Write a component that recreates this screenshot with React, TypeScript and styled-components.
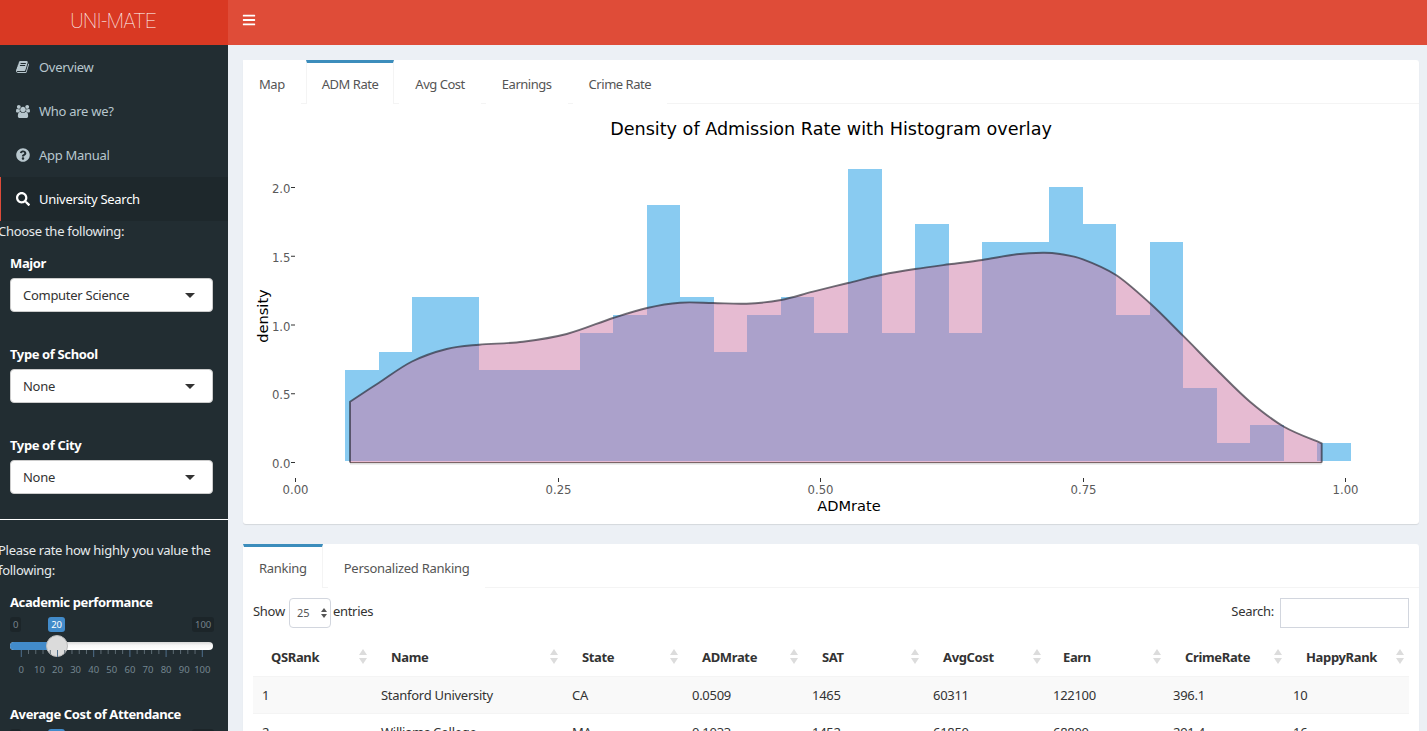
import React from "react";
import styled, { createGlobalStyle } from "styled-components";
import { FaBars, FaQuestionCircle, FaSearch } from "react-icons/fa";

const SANS = `"Noto Sans", "Open Sans", "Liberation Sans", sans-serif`;
const PLOT = `"DejaVu Sans", Verdana, sans-serif`;

const Global = createGlobalStyle`
  html, body { margin: 0; padding: 0; height: 100%; overflow: hidden; background: #ecf0f5; }
  body { font-family: ${SANS}; font-size: 13px; letter-spacing: -0.28px; color: #333; }
  * { box-sizing: border-box; }
`;

const Page = styled.div`height: 731px; display: flex; flex-direction: column; overflow: hidden;`;
const Header = styled.header`height: 45px; flex: none; display: flex; background: #df4c38;`;
const Logo = styled.div`
  width: 228px; background: #d93923; color: #fff; display: flex; align-items: center; justify-content: center;
  padding: 0 2px 4px 0;
  font-family: Roboto, sans-serif; font-weight: 100; font-size: 20px; letter-spacing: -0.55px;
`;
const Toggle = styled.div`width: 42px; padding-bottom: 5px; display: flex; align-items: center; justify-content: center; color: #fff; font-size: 14px;`;
const Body = styled.div`flex: 1; display: flex; min-height: 0;`;
const Sidebar = styled.aside`width: 228px; flex: none; background: #222d32; color: #fff; overflow: hidden;`;
const MenuItem = styled.div<{ $active?: boolean }>`
  height: 44px; display: flex; align-items: center; padding-left: ${p => (p.$active ? 15 : 16)}px; gap: 9px;
  color: ${p => (p.$active ? "#fff" : "#b8c7ce")};
  background: ${p => (p.$active ? "#1e282c" : "transparent")};
  border-left: ${p => (p.$active ? "1px solid #dd4b39" : "0")};
`;
const IconSlot = styled.span`width: 14px; height: 14px; display: flex; align-items: center; justify-content: center; font-size: 14px; flex: none;`;
const Plain = styled.div<{ $top?: number }>`
  margin: ${p => p.$top ?? 0}px 0 0 -2px; line-height: 20px; color: #e6eaec; padding-right: 4px;
`;
const Group = styled.div<{ $top: number }>`margin-top: ${p => p.$top}px; padding: 0 15px 0 10px;`;
const FieldLabel = styled.div`font-weight: 700; color: #fff; line-height: 18px; letter-spacing: -0.38px;`;
const SelectBox = styled.div`
  margin-top: 6px; height: 34px; background: #fff; border: 1px solid #ccc; border-radius: 4px; color: #333;
  display: flex; align-items: center; justify-content: space-between; padding: 0 17px 0 12px;
`;
const Caret = styled.span`width: 0; height: 0; border-left: 5px solid transparent; border-right: 5px solid transparent; border-top: 5px solid #333;`;
const Rule = styled.hr`margin: 25px 0 0; border: 0; border-top: 1px solid #fff; height: 0;`;
const Slider = styled.div`position: relative; height: 70px; margin-top: 4px;`;
const Bubble = styled.span<{ $left: number; $blue?: boolean }>`
  position: absolute; top: 2px; left: ${p => p.$left}px; height: 15px; padding: 0 3px; border-radius: 3px;
  font-size: 9.5px; line-height: 15px; letter-spacing: 0;
  color: ${p => (p.$blue ? "#fff" : "#76838b")}; background: ${p => (p.$blue ? "#428bca" : "#1c2529")};
`;
const Track = styled.div`
  position: absolute; top: 27px; left: 0; right: 0; height: 8px; border-radius: 4px;
  background: linear-gradient(#d8d8d8, #f6f6f6 40%, #fff);
`;
const TrackFill = styled.div`position: absolute; top: 27px; left: 0; height: 8px; border-radius: 4px 0 0 4px; background: #428bca;`;
const Handle = styled.div`
  position: absolute; top: 20px; width: 22px; height: 22px; border-radius: 50%; background: #dbdbdb; border: 1px solid #bbb;
`;
const Ruler = styled.svg`position: absolute; left: 0; top: 35px; width: 203px; height: 26px; display: block;`;

const Main = styled.main`flex: 1; min-width: 0; padding: 15px 8px 0 15px; display: flex; flex-direction: column; gap: 20px;`;
const Box = styled.section<{ $h?: number }>`
  background: #fff; border-radius: 3px; box-shadow: 0 1px 1px rgba(0,0,0,.1); flex: none;
  ${p => (p.$h ? `height: ${p.$h}px;` : "")}
`;
const Tabs = styled.nav<{ $tight?: boolean }>`
  display: flex; height: 44px; border-bottom: 1px solid #f4f4f4;
  letter-spacing: ${p => (p.$tight ? "-0.47px" : "-0.28px")};
`;
const Tab = styled.div<{ $active?: boolean }>`
  padding: 0 15px; margin-right: 5px; display: flex; align-items: center; color: #555; height: 44px;
  border-top: 3px solid ${p => (p.$active ? "#3c8dbc" : "transparent")};
  border-left: 1px solid ${p => (p.$active ? "#f4f4f4" : "transparent")};
  border-right: 1px solid ${p => (p.$active ? "#f4f4f4" : "transparent")};
  background: #fff;
  &:first-child { border-left-color: transparent; }
`;
const ChartSvg = styled.svg`display: block; width: 1176px; height: 420px;`;
const TablePane = styled.div`padding: 10px 10px 0;`;
const Controls = styled.div`display: flex; justify-content: space-between; align-items: flex-start; height: 30px;`;
const Inline = styled.div`display: flex; align-items: flex-start; gap: 3px; line-height: 26px;`;
const LenSelect = styled.div`
  width: 42px; height: 30px; margin: 0 -1px 0 1px; border: 1px solid #d2d6de; border-radius: 4px; display: flex; align-items: center;
  padding-left: 7px; justify-content: space-between; padding-right: 2px; font-size: 11px; color: #555; letter-spacing: 0;
`;
const Search = styled.div`width: 129px; height: 30px; border: 1px solid #d2d6de; margin-left: 3px;`;
const Table = styled.table`
  width: 1156px; margin: 10px 0 0 0; border-collapse: collapse; table-layout: fixed;
`;
const Th = styled.th<{ $pl: number; $pr: number }>`
  height: 38px; padding: 0 ${p => p.$pr}px 0 ${p => p.$pl}px; text-align: left; font-weight: 700; color: #333; letter-spacing: -0.35px;
`;
const ThInner = styled.div`display: flex; align-items: center; justify-content: space-between;`;
const Td = styled.td`height: 37px; padding: 0 0 0 9px; border-top: 1px solid #f4f4f4;`;
const Tr = styled.tr<{ $odd?: boolean }>`background: ${p => (p.$odd ? "#f9f9f9" : "#fff")};`;

const BookIcon = () => (
  <svg width="14" height="14" viewBox="0 0 1792 1792" fill="currentColor"><path d="M1639 478q40 57 18 129l-275 906q-19 64-76.5 107.5t-122.5 43.5h-923q-77 0-148.5-53.5t-99.5-131.5q-24-67-2-127 0-4 3-27t4-37q1-8-3-21.5t-3-19.5q2-11 8-21t16.5-23.5 16.5-23.5q23-38 45-91.5t30-91.5q3-10 .5-30t-.5-28q3-11 17-28t17-23q21-36 42-92t25-90q1-9-2.5-32t.5-28q4-13 22-30.5t22-22.5q19-26 42.5-84.5t27.5-96.5q1-8-3-25.5t-2-26.5q2-8 9-18t18-23 17-21q8-12 16.5-30.5t15-35 16-36 19.5-32 26.5-23.5 36-11.5 47.5 5.5l-1 3q38-9 51-9h761q74 0 114 56t18 130l-274 906q-36 119-71.5 153.5t-128.5 34.5h-869q-27 0-38 15-11 16-1 43 24 70 144 70h923q29 0 56-15.5t35-41.5l300-987q7-22 5-57 38 15 59 43zm-1064 2q-4 13 2 22.5t20 9.5h608q13 0 25.5-9.5t16.5-22.5l21-64q4-13-2-22.5t-20-9.5h-608q-13 0-25.5 9.5t-16.5 22.5zm-83 256q-4 13 2 22.5t20 9.5h608q13 0 25.5-9.5t16.5-22.5l21-64q4-13-2-22.5t-20-9.5h-608q-13 0-25.5 9.5t-16.5 22.5z" /></svg>
);
const UsersIcon = () => (
  <svg width="15" height="15" viewBox="0 0 1920 1792" fill="currentColor"><path d="M593 896q-162 5-265 128h-134q-82 0-138-40.5t-56-118.5q0-353 124-353 6 0 43.5 21t97.5 42.5 119 21.5q67 0 133-23-5 37-5 66 0 139 81 256zm1071 637q0 120-73 189.5t-194 69.5h-874q-121 0-194-69.5t-73-189.5q0-53 3.5-103.5t14-109 26.5-108.5 43-97.5 62-81 85.5-53.5 111.5-20q10 0 43 21.5t73 48 107 48 135 21.5 135-21.5 107-48 73-48 43-21.5q61 0 111.5 20t85.5 53.5 62 81 43 97.5 26.5 108.5 14 109 3.5 103.5zm-1024-1277q0 106-75 181t-181 75-181-75-75-181 75-181 181-75 181 75 75 181zm704 384q0 159-112.5 271.5t-271.5 112.5-271.5-112.5-112.5-271.5 112.5-271.5 271.5-112.5 271.5 112.5 112.5 271.5zm576 225q0 78-56 118.5t-138 40.5h-134q-103-123-265-128 81-117 81-256 0-29-5-66 66 23 133 23 59 0 119-21.5t97.5-42.5 43.5-21q124 0 124 353zm-128-609q0 106-75 181t-181 75-181-75-75-181 75-181 181-75 181 75 75 181z" /></svg>
);

const SortIcon = () => (
  <svg width="8" height="15" viewBox="0 0 8 15" fill="#dcdcdc"><path d="M4 0l4 6H0zM4 15L0 9h8z" /></svg>
);
const SmallArrows = () => (
  <svg width="8" height="12" viewBox="0 0 8 12" fill="#555"><path d="M4 1l3 4H1zM4 11L1 7h6z" /></svg>
);

const BAR_TOPS = [370,352,297,297,370,370,370,333,315,205,297,352,315,297,333,169,333,224,333,242,242,187,224,315,242,388,443,425,461,443];
const BAR0 = 345, BARW = 33.533, BAR_BASE = 461;
const barEdge = (i: number) => Math.round(BAR0 + i * BARW);

const CURVE: [number, number][] = [
  [350,401.7],[379,382.7],[412,361.5],[446.7,349],[479,344.7],[523,341.7],[566.7,334],[613,318],[647,308],[680,302.7],
  [713,303],[746.7,303.7],[781,300],[813,291.7],[848,283],[882,274.7],[915,269],[949,264.3],[982,260],[1016.7,254.3],
  [1043,252.7],[1060,254],[1083,259.3],[1116,275],[1150,303.3],[1183,335.7],[1217,370],[1250,401.7],[1284,426.7],[1321.7,443.3],
];
const smooth = (pts: [number, number][]) => {
  let d = `M${pts[0][0]} ${pts[0][1]}`;
  for (let i = 0; i < pts.length - 1; i++) {
    const p0 = pts[Math.max(i - 1, 0)], p1 = pts[i], p2 = pts[i + 1], p3 = pts[Math.min(i + 2, pts.length - 1)];
    const c1x = p1[0] + (p2[0] - p0[0]) / 6, c1y = p1[1] + (p2[1] - p0[1]) / 6;
    const c2x = p2[0] - (p3[0] - p1[0]) / 6, c2y = p2[1] - (p3[1] - p1[1]) / 6;
    d += `C${c1x.toFixed(1)} ${c1y.toFixed(1)} ${c2x.toFixed(1)} ${c2y.toFixed(1)} ${p2[0]} ${p2[1]}`;
  }
  return d;
};
const TOP_CURVE = smooth(CURVE);
const DENSITY = `${TOP_CURVE}L1321.7 462.5L350 462.5Z`;

const Chart = () => (
  <ChartSvg viewBox="243 104 1176 420">
    <text x="831" y="135" textAnchor="middle" fontFamily={PLOT} fontSize="17.6" fill="#000" letterSpacing="0">Density of Admission Rate with Histogram overlay</text>
    {BAR_TOPS.map((t, i) => (
      <rect key={i} x={barEdge(i)} y={t} width={barEdge(i + 1) - barEdge(i)} height={BAR_BASE - t} fill="#89cbf1" />
    ))}
    <path d={DENSITY} fill="rgba(205,119,165,.5)" />
    <path d="M350 463.5H1321.7" stroke="#ddd" strokeWidth="2" fill="none" />
    <path d="M350 462.5H1321.7" stroke="#7c6467" strokeWidth="1" fill="none" />
    <path d={`M350 462.5V401.7${TOP_CURVE.slice(TOP_CURVE.indexOf("C"))}V462.5`} fill="none" stroke="rgba(40,40,50,.66)" strokeWidth="1.9" strokeLinejoin="round" />
    {[["0.0",462.5],["0.5",393.75],["1.0",325],["1.5",256.25],["2.0",187.5]].map(([l, y]) => (
      <g key={l as string}>
        <path d={`M291 ${y}H295`} stroke="#333" strokeWidth="1" />
        <text x="290.5" y={(y as number) + 5.5} textAnchor="end" fontFamily={PLOT} fontSize="11.7" fill="#5a5a5a" letterSpacing="0">{l}</text>
      </g>
    ))}
    {[["0.00",295.5],["0.25",558.5],["0.50",820.5],["0.75",1083.5],["1.00",1345.5]].map(([l, x]) => (
      <g key={l as string}>
        <path d={`M${x} 478V482`} stroke="#333" strokeWidth="1" />
        <text x={x} y="493.5" textAnchor="middle" fontFamily={PLOT} fontSize="11.7" fill="#5a5a5a" letterSpacing="0">{l}</text>
      </g>
    ))}
    <text x="849" y="511" textAnchor="middle" fontFamily={PLOT} fontSize="14.6" fill="#000" letterSpacing="0">ADMrate</text>
    <text transform="translate(268 316) rotate(-90)" textAnchor="middle" fontFamily={PLOT} fontSize="14.6" fill="#000" letterSpacing="0">density</text>
  </ChartSvg>
);

const RULER_TICKS = Array.from({ length: 26 }, (_, i) => i * 2);

const Rating = ({ top, title, val }: { top: number; title: string; val: number }) => {
  const x = 11 + (val / 100) * 181;
  return (
    <Group $top={top}>
      <FieldLabel>{title}</FieldLabel>
      <Slider>
        <Bubble $left={0}>0</Bubble>
        <Bubble $left={x - 9} $blue>{val}</Bubble>
        <Bubble $left={182}>100</Bubble>
        <Track />
        <TrackFill style={{ width: x }} />
        <Handle style={{ left: x - 11 }} />
        <Ruler viewBox="0 0 203 26">
          {RULER_TICKS.map(i => {
            const px = 11.3 + (i / 50) * 181;
            const major = i % 10 === 0;
            return <path key={i} d={`M${px} 0V${major ? 7 : 4}`} stroke={major ? "#4f6f8c" : "#5d6b73"} strokeWidth="1" />;
          })}
          {[0,10,20,30,40,50,60,70,80,90,100].map((n, i) => (
            <text key={n} x={11.3 + i * 18.1} y="23" textAnchor="middle" fontSize="9.5" fill="#748690" fontFamily={SANS} letterSpacing="0">{n}</text>
          ))}
        </Ruler>
      </Slider>
    </Group>
  );
};

const COLS = [119,191,120,120,121,120,120,120,125];
const HEAD: [string, number, number][] = [
  ["QSRank",18,5],["Name",19,5],["State",19,5],["ADMrate",19,5],["SAT",19,5],["AvgCost",19,3],["Earn",19,3],["CrimeRate",21,2],["HappyRank",22,5],
];
const ROWS = [
  ["1","Stanford University","CA","0.0509","1465","60311","122100","396.1","10"],
  ["2","Williams College","MA","0.1033","1452","61850","68800","291.4","16"],
];

export default function App() {
  return (
    <Page>
      <Global />
      <Header>
        <Logo>UNI-MATE</Logo>
        <Toggle><FaBars /></Toggle>
      </Header>
      <Body>
        <Sidebar>
          <MenuItem><IconSlot><BookIcon /></IconSlot>Overview</MenuItem>
          <MenuItem><IconSlot><UsersIcon /></IconSlot>Who are we?</MenuItem>
          <MenuItem><IconSlot><FaQuestionCircle /></IconSlot>App Manual</MenuItem>
          <MenuItem $active><IconSlot><FaSearch /></IconSlot>University Search</MenuItem>
          <Plain>Choose the following:</Plain>
          <Group $top={13}><FieldLabel>Major</FieldLabel><SelectBox>Computer Science<Caret /></SelectBox></Group>
          <Group $top={33}><FieldLabel>Type of School</FieldLabel><SelectBox>None<Caret /></SelectBox></Group>
          <Group $top={33}><FieldLabel>Type of City</FieldLabel><SelectBox>None<Caret /></SelectBox></Group>
          <Rule />
          <Plain $top={20}>Please rate how highly you value the following:</Plain>
          <Rating top={13} title="Academic performance" val={20} />
          <Rating top={20} title="Average Cost of Attendance" val={20} />
        </Sidebar>
        <Main>
          <Box $h={464}>
            <Tabs $tight>
              <Tab>Map</Tab>
              <Tab $active>ADM Rate</Tab>
              <Tab>Avg Cost</Tab>
              <Tab>Earnings</Tab>
              <Tab>Crime Rate</Tab>
            </Tabs>
            <Chart />
          </Box>
          <Box>
            <Tabs>
              <Tab $active>Ranking</Tab>
              <Tab>Personalized Ranking</Tab>
            </Tabs>
            <TablePane>
              <Controls>
                <Inline>Show<LenSelect>25<SmallArrows /></LenSelect>entries</Inline>
                <Inline>Search:<Search /></Inline>
              </Controls>
              <Table>
                <colgroup>{COLS.map((w, i) => <col key={i} style={{ width: w }} />)}</colgroup>
                <thead><tr>{HEAD.map(([h, pl, pr]) => <Th key={h} $pl={pl} $pr={pr}><ThInner>{h}<SortIcon /></ThInner></Th>)}</tr></thead>
                <tbody>
                  {ROWS.map((r, i) => (
                    <Tr key={r[0]} $odd={i === 0}>{r.map((c, j) => <Td key={j}>{c}</Td>)}</Tr>
                  ))}
                </tbody>
              </Table>
            </TablePane>
          </Box>
        </Main>
      </Body>
    </Page>
  );
}
